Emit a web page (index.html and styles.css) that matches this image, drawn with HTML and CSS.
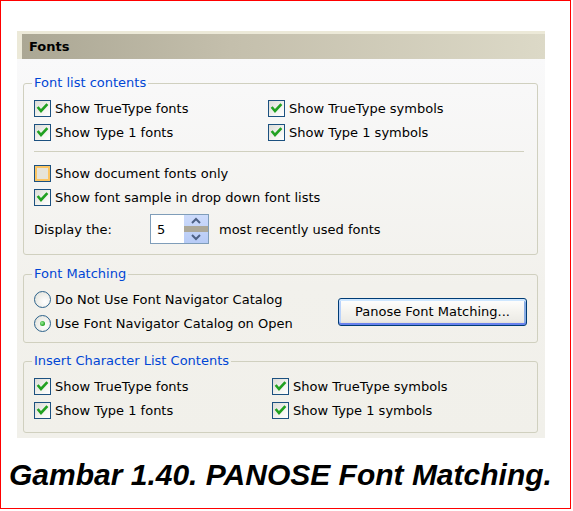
FILE: index.html
```html
<!DOCTYPE html>
<html>
<head>
<meta charset="utf-8">
<link rel="stylesheet" href="styles.css">
</head>
<body>
<div class="frame">
  <div class="panel">
    <div class="header"><span class="title">Fonts</span></div>
    <div class="content">
      <fieldset class="group g1">
        <legend>Font list contents</legend>
        <div class="grid grid1">
          <label class="row"><span class="cb on"><svg viewBox="0 0 17 17"><polyline points="4.5,8 7,11 12.5,5" /></svg></span>Show TrueType fonts</label>
          <label class="row"><span class="cb on"><svg viewBox="0 0 17 17"><polyline points="4.5,8 7,11 12.5,5" /></svg></span>Show TrueType symbols</label>
          <label class="row"><span class="cb on"><svg viewBox="0 0 17 17"><polyline points="4.5,8 7,11 12.5,5" /></svg></span>Show Type 1 fonts</label>
          <label class="row"><span class="cb on"><svg viewBox="0 0 17 17"><polyline points="4.5,8 7,11 12.5,5" /></svg></span>Show Type 1 symbols</label>
        </div>
        <div class="sep"></div>
        <label class="row"><span class="cb hover"></span>Show document fonts only</label>
        <label class="row"><span class="cb on"><svg viewBox="0 0 17 17"><polyline points="4.5,8 7,11 12.5,5" /></svg></span>Show font sample in drop down font lists</label>
        <div class="display">
          <span class="dlabel">Display the:</span>
          <span class="spin">
            <span class="val">5</span>
            <span class="spinbtn">
              <svg class="arr" viewBox="0 0 24 28">
                <polyline points="8,8 12,4 16,8" />
                <rect x="0" y="11" width="24" height="6" class="bar" />
                <polyline points="8,20 12,24 16,20" />
              </svg>
            </span>
          </span>
          <span class="dtext">most recently used fonts</span>
        </div>
      </fieldset>

      <fieldset class="group g2">
        <legend>Font Matching</legend>
        <div class="matching">
          <div class="radios">
            <label class="row"><span class="rb"></span>Do Not Use Font Navigator Catalog</label>
            <label class="row"><span class="rb on"><span class="dot"></span></span>Use Font Navigator Catalog on Open</label>
          </div>
          <button class="btn">Panose Font Matching...</button>
        </div>
      </fieldset>

      <fieldset class="group g3">
        <legend>Insert Character List Contents</legend>
        <div class="grid grid3">
          <label class="row"><span class="cb on"><svg viewBox="0 0 17 17"><polyline points="4.5,8 7,11 12.5,5" /></svg></span>Show TrueType fonts</label>
          <label class="row"><span class="cb on"><svg viewBox="0 0 17 17"><polyline points="4.5,8 7,11 12.5,5" /></svg></span>Show TrueType symbols</label>
          <label class="row"><span class="cb on"><svg viewBox="0 0 17 17"><polyline points="4.5,8 7,11 12.5,5" /></svg></span>Show Type 1 fonts</label>
          <label class="row"><span class="cb on"><svg viewBox="0 0 17 17"><polyline points="4.5,8 7,11 12.5,5" /></svg></span>Show Type 1 symbols</label>
        </div>
      </fieldset>
    </div>
  </div>
  <div class="caption">Gambar 1.40. PANOSE Font Matching.</div>
</div>
</body>
</html>
```

FILE: styles.css
```css
html, body {
  margin: 0;
  padding: 0;
  background: #ffffff;
}

.frame {
  width: 569px;
  height: 507px;
  border: 1px solid #ff0000;
  overflow: hidden;
}

.panel {
  margin: 30px 0 0 16px;
  width: 528px;
  height: 407px;
  background: #ece9d8;
  display: flex;
  flex-direction: column;
  font-family: "DejaVu Sans", Verdana, sans-serif;
  font-size: 13px;
  color: #000;
}

.header {
  margin: 3px 0 0 5px;
  height: 25px;
  background: linear-gradient(to right, #aba794, #c4bfac 40%, #dcd9c7);
  display: flex;
  align-items: center;
  padding-left: 7px;
}

.title {
  font-weight: bold;
  font-size: 13px;
}

.content {
  flex: 1;
  background: linear-gradient(#f9f9fa, #f2f1ec 60%, #f1f0ea);
  padding: 16px 7px 0 6px;
}

.group {
  margin: 0;
  border: 1px solid #d0d0bf;
  border-radius: 3px;
  padding: 5px 10px 10px 10px;
  min-width: 0;
}

.group legend {
  color: #0046d5;
  padding: 0 2px;
  margin-left: -2px;
  line-height: 16px;
  font-size: 13px;
}

.g2 {
  margin-top: 11px;
  padding-bottom: 7px;
}

.g3 {
  margin-top: 10px;
  padding-bottom: 10px;
}

.grid {
  display: grid;
}

.grid1 {
  grid-template-columns: 234px 1fr;
}

.grid3 {
  grid-template-columns: 238px 1fr;
}

.row {
  display: flex;
  align-items: center;
  height: 24px;
  gap: 4px;
  white-space: nowrap;
}

.cb {
  flex: none;
  width: 15px;
  height: 15px;
  border: 1px solid #1c5180;
  background: linear-gradient(135deg, #dcdcd7, #f4f4f0 60%, #ffffff);
  display: inline-block;
  position: relative;
}

.cb svg {
  position: absolute;
  left: -1px;
  top: -1px;
  width: 17px;
  height: 17px;
}

.cb polyline {
  fill: none;
  stroke: #21a121;
  stroke-width: 2.6;
  stroke-linecap: square;
}

.cb.hover {
  background: #e6e4da;
  box-shadow: inset 0 0 0 2px #fbc563;
}

.sep {
  height: 1px;
  background: #d0d0bf;
  margin: 7px 3px 9px 0;
}

.display {
  display: flex;
  align-items: center;
  margin-top: 5px;
  height: 30px;
  white-space: nowrap;
}

.dlabel {
  width: 116px;
}

.spin {
  width: 57px;
  height: 28px;
  border: 1px solid #7f9db9;
  background: #fff;
  display: flex;
  align-items: center;
  justify-content: space-between;
}

.val {
  padding-left: 6px;
}

.spinbtn {
  width: 24px;
  height: 28px;
  background: linear-gradient(#cddbfb, #b7cbf6);
  display: block;
}

.arr {
  width: 24px;
  height: 28px;
  display: block;
}

.arr polyline {
  fill: none;
  stroke: #4d6185;
  stroke-width: 2;
}

.arr .bar {
  fill: #aca899;
}

.dtext {
  margin-left: 10px;
}

.matching {
  display: flex;
  align-items: center;
  justify-content: space-between;
}

.rb {
  flex: none;
  width: 15px;
  height: 15px;
  border-radius: 50%;
  border: 1px solid #2c628b;
  background: radial-gradient(circle at 65% 65%, #ffffff, #e6e6df 80%);
  display: inline-flex;
  align-items: center;
  justify-content: center;
}

.rb .dot {
  width: 5px;
  height: 5px;
  border-radius: 50%;
  background: radial-gradient(circle at 40% 40%, #9cf09c, #21a121 70%);
}

.btn {
  font-family: "DejaVu Sans", Verdana, sans-serif;
  font-size: 13px;
  color: #000;
  width: 189px;
  height: 28px;
  margin-right: 0;
  margin-top: 1px;
  border: 1px solid #003c74;
  border-radius: 3px;
  background: linear-gradient(#ffffff, #f4f3ee 50%, #ecebe6 85%, #d6d0c5);
  box-shadow: inset 0 2px 0 #cee7ff, inset 0 -2px 0 #6982ee, inset 2px 0 0 #b8d2fb, inset -2px 0 0 #89ade4;
  padding: 0;
}

.caption {
  margin-top: 19px;
  padding-left: 8px;
  font-family: "Liberation Sans", Arial, sans-serif;
  font-weight: bold;
  font-style: italic;
  font-size: 30px;
  line-height: 36px;
  color: #000;
  white-space: nowrap;
}
```
